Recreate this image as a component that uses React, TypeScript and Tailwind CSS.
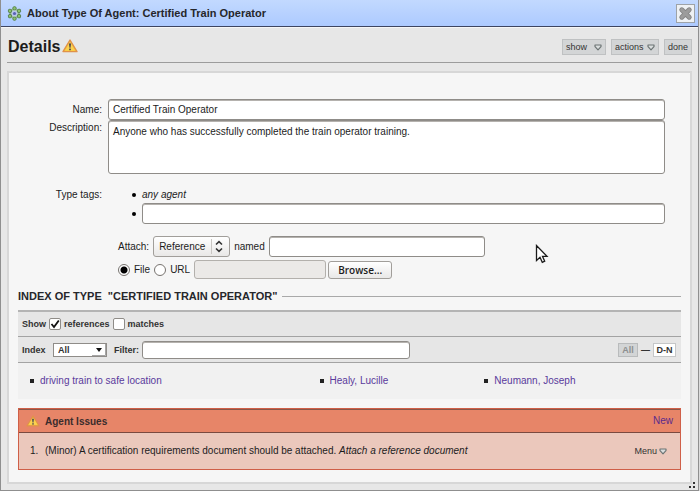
import React from "react";

const field = "rounded-[3px] border border-[#8f8c88] bg-white shadow-[inset_0_1px_0_#b5b2ae]";

function AgentIcon() {
  const dots = [0, 60, 120, 180, 240, 300];
  return (
    <svg width="15" height="15" viewBox="0 0 15 15" aria-hidden="true">
      <circle cx="7.5" cy="7.5" r="4.8" fill="#a9cba6" stroke="#7da07c" strokeWidth="0.8" />
      {dots.map((a) => (
        <g key={a} transform={`rotate(${a} 7.5 7.5)`}>
          <circle cx="7.5" cy="2.3" r="1.7" fill="#8cc46e" stroke="#56804e" strokeWidth="0.9" />
        </g>
      ))}
      <circle cx="7.5" cy="7.5" r="2.9" fill="#b9c6ea" />
      <circle cx="7.5" cy="7.5" r="1.6" fill="#5a62b4" />
    </svg>
  );
}

function Warning({ className }: { className: string }) {
  return (
    <svg className={className} viewBox="0 0 16 14" role="img" aria-label="Warning">
      <path
        d="M8 1.1 L15 12.6 H1 Z"
        fill="#f8c93c"
        stroke="#e0924a"
        strokeWidth="1.4"
        strokeLinejoin="round"
      />
      <path d="M8 3 L12.9 11.5 H3.1 Z" fill="#fbd250" />
      <path d="M7 4.4 H9 L8.5 8.8 H7.5 Z" fill="#3c3c50" />
      <rect x="7.2" y="9.6" width="1.6" height="1.6" fill="#3c3c50" />
    </svg>
  );
}

function Caret() {
  return (
    <svg width="8" height="7" viewBox="0 0 8 7" aria-hidden="true">
      <path
        d="M1 1 H7 V2.6 L4 5.9 L1 2.6 Z"
        fill="#d9dddd"
        stroke="#6d7575"
        strokeWidth="1.2"
        strokeLinejoin="round"
      />
    </svg>
  );
}

function ToolButton({ children, caret }: { children: string; caret?: boolean }) {
  return (
    <button
      type="button"
      className="flex h-4 items-center justify-between border border-[#bfc1c2] bg-[#d3d5d6] px-[3px] text-[9px] leading-3 text-[#333]"
    >
      {children}
      {caret && <Caret />}
    </button>
  );
}

function IndexLink({ children }: { children: string }) {
  return (
    <li className="flex items-center gap-[6px]">
      <span className="size-1 bg-[#222]" />
      <a href="#" className="text-[#5a3a9c]">
        {children}
      </a>
    </li>
  );
}

export default function App() {
  return (
    <div className="bg-[#dcdcdc] pr-px font-['Liberation_Sans',Arial,sans-serif] text-[10px] leading-4 text-[#1c1c1c]">
      <main className="relative border border-t-0 border-[#8f8f8f] bg-[#e7e7e7]">
        <header className="flex h-[27px] items-center justify-between border-b border-[#3e4560] bg-linear-to-b from-[#c2d9ff] to-[#adcaff] pr-[3px] pl-[6px]">
          <div className="flex items-center gap-[5px]">
            <AgentIcon />
            <h1 className="text-[11px] font-bold text-[#26272b]">
              About Type Of Agent: Certified Train Operator
            </h1>
          </div>
          <button
            type="button"
            aria-label="Close"
            className="grid size-[19px] place-items-center border border-[#9ea3a8] bg-[#eef1f4]"
          >
            <svg width="15" height="15" viewBox="0 0 15 15">
              <path
                d="M3.8 3.8 L11.2 11.2 M11.2 3.8 L3.8 11.2"
                stroke="#858585"
                strokeWidth="5"
                strokeLinecap="round"
              />
              <path
                d="M3.8 3.8 L11.2 11.2 M11.2 3.8 L3.8 11.2"
                stroke="#9c9c9c"
                strokeWidth="3.2"
                strokeLinecap="round"
              />
            </svg>
          </button>
        </header>

        <div className="border-t border-[#f6f6f6] px-[6px] pb-[6px]">
          <div className="flex h-[35px] items-center justify-between border-b border-[#9c9c9c] pt-1 pl-px">
            <div className="flex items-center gap-[2px]">
              <h2 className="text-base font-bold">Details</h2>
              <Warning className="mb-[2px] h-[14px] w-4" />
            </div>
            <div className="flex gap-[5px]">
              <div className="grid w-[44px]">
                <ToolButton caret>show</ToolButton>
              </div>
              <div className="grid w-[48px]">
                <ToolButton caret>actions</ToolButton>
              </div>
              <ToolButton>done</ToolButton>
            </div>
          </div>

          <div className="mt-2 border-2 border-[#d7d7d7] bg-[#f6f6f6] pb-3">
            <form className="grid grid-cols-[93px_1fr] gap-x-[6px] pt-[26px] pr-[25px]">
              <label htmlFor="name" className="pt-[3px] text-right">
                Name:
              </label>
              <input
                id="name"
                defaultValue="Certified Train Operator"
                className={`${field} h-[21px] w-full px-1`}
              />
              <label htmlFor="desc" className="text-right">
                Description:
              </label>
              <textarea
                id="desc"
                defaultValue="Anyone who has successfully completed the train operator training."
                className={`${field} h-[54px] w-full resize-none px-1 py-[3px]`}
              />
              <label htmlFor="tag" className="mt-[13px] text-right">
                Type tags:
              </label>
              <ul className="mt-[13px] list-none pl-6">
                <li className="flex items-center gap-[6px]">
                  <span className="size-1 rounded-full bg-black" />
                  <i>any agent</i>
                </li>
                <li className="flex items-center gap-[6px]">
                  <span className="size-1 rounded-full bg-black" />
                  <input
                    id="tag"
                    aria-label="New type tag"
                    className={`${field} h-[21px] flex-1 px-1`}
                  />
                </li>
              </ul>
              <div className="col-start-2 mt-3 flex h-[21px] items-center gap-1 pl-[10px]">
                <label htmlFor="kind">Attach:</label>
                <div className="relative">
                  <select
                    id="kind"
                    className="h-[21px] w-[77px] appearance-none rounded-[3px] border border-[#a19e9a] bg-linear-to-b from-white to-[#e9e8e7] px-[5px]"
                  >
                    <option>Reference</option>
                  </select>
                  <svg
                    className="pointer-events-none absolute top-[3px] right-[3px] h-[15px] w-4"
                    viewBox="0 0 16 15"
                  >
                    <path d="M0.5 0 V15" stroke="#c9c6c3" />
                    <path
                      d="M5 5.5 L8 2.700 L11 5.5 M5 9.5 L8 12.300 L11 9.5"
                      fill="none"
                      stroke="#333"
                      strokeWidth="1.6"
                    />
                  </svg>
                </div>
                <label htmlFor="refname">named</label>
                <input id="refname" className={`${field} h-[21px] w-[216px] px-1`} />
              </div>
              <div className="col-start-2 mt-[3px] flex h-[19px] items-center gap-1 pl-[10px]">
                <input
                  id="file"
                  type="radio"
                  name="src"
                  defaultChecked
                  className="size-3 appearance-none rounded-full border border-[#77736f] bg-white bg-[radial-gradient(circle,#000_3px,transparent_4px)]"
                />
                <label htmlFor="file">File</label>
                <input
                  id="url"
                  type="radio"
                  name="src"
                  className="size-3 appearance-none rounded-full border border-[#77736f] bg-white"
                />
                <label htmlFor="url">URL</label>
                <input
                  aria-label="File path"
                  disabled
                  className="h-[19px] w-[132px] rounded-[3px] border border-[#b3b0ac] bg-[#ebe9e7]"
                />
                <button
                  type="button"
                  className="-ml-[2px] h-[18px] w-16 rounded-[3px] border border-[#a19e9a] bg-linear-to-b from-white to-[#e9e8e7] font-['Open_Sans',sans-serif] text-[10px] leading-3 font-semibold"
                >
                  Browse...
                </button>
              </div>
            </form>

            <section className="mt-[9px] px-[9px]">
              <div className="flex items-center gap-[5px]">
                <h3 className="text-[11px] font-bold text-[#26272b]">
                  INDEX OF TYPE &nbsp;"CERTIFIED TRAIN OPERATOR"
                </h3>
                <hr className="flex-1 border-[#a9a9a9]" />
              </div>
              <div className="mt-[6px] border-t-2 border-[#b4b4b4] bg-[#e6e6e6] text-[9px] font-bold text-[#333]">
                <div className="flex h-[25px] items-center gap-[3px] border-b border-[#a3a3a3] pl-1">
                  <span>Show</span>
                  <div className="relative size-3">
                    <input
                      id="refs"
                      type="checkbox"
                      defaultChecked
                      className="peer block size-3 appearance-none rounded-[2px] border border-[#8f8c88] bg-white"
                    />
                    <svg
                      className="pointer-events-none absolute inset-0 hidden size-3 peer-checked:block"
                      viewBox="0 0 12 12"
                    >
                      <path d="M2.5 6 L5 9 L9.800 2.500" fill="none" stroke="#111" strokeWidth="1.8" />
                    </svg>
                  </div>
                  <label htmlFor="refs">references</label>
                  <input
                    id="matches"
                    type="checkbox"
                    className="size-3 appearance-none rounded-[2px] border border-[#8f8c88] bg-white"
                  />
                  <label htmlFor="matches">matches</label>
                </div>
                <div className="flex h-[26px] items-center border-b border-[#a3a3a3] pr-[5px] pl-1">
                  <label htmlFor="index" className="w-[31px]">
                    Index
                  </label>
                  <div className="relative mr-[7px]">
                    <select
                      id="index"
                      className="block h-[14px] w-[54px] appearance-none border border-[#8f8c88] bg-white px-1 leading-3"
                    >
                      <option>All</option>
                    </select>
                    <svg
                      className="pointer-events-none absolute top-px right-px h-3 w-[14px]"
                      viewBox="0 0 14 12"
                    >
                      <path d="M0 11.5 H13.5 V0" fill="none" stroke="#a5a5a5" />
                      <path d="M4 4 H10 L7 8 Z" fill="#111" />
                    </svg>
                  </div>
                  <label htmlFor="filter" className="w-[28px]">
                    Filter:
                  </label>
                  <input id="filter" className={`${field} h-[18px] w-[268px] px-1`} />
                  <div className="ml-auto flex items-center gap-[3px]">
                    <button
                      type="button"
                      className="h-[14px] w-5 border border-[#b9bbbc] bg-[#d3d5d6] leading-3 text-[#8d8f90]"
                    >
                      All
                    </button>
                    <span>—</span>
                    <button
                      type="button"
                      className="h-[14px] w-[23px] border border-[#c5c7c8] bg-white leading-3"
                    >
                      D-N
                    </button>
                  </div>
                </div>
              </div>
              <ul className="grid h-9 grid-cols-[290fr_165fr_197fr] items-center bg-[#f1f1f1] pl-3">
                <IndexLink>driving train to safe location</IndexLink>
                <IndexLink>Healy, Lucille</IndexLink>
                <IndexLink>Neumann, Joseph</IndexLink>
              </ul>
            </section>

            <section className="mx-[9px] mt-[9px] border border-[#cf5f48] bg-[#ebc8bc]">
              <div className="flex h-6 items-center border-t border-b border-t-[#8a5648] border-b-[#7a4a40] bg-[#e78568] pr-[7px] pl-[7px]">
                <Warning className="h-3 w-[14px]" />
                <h3 className="ml-[5px] pt-[2px] font-bold text-[#3a2c2c]">Agent Issues</h3>
                <a href="#" className="ml-auto text-[#5a2a8c]">
                  New
                </a>
              </div>
              <ol className="pt-[10px] pb-[10px]">
                <li className="flex items-center pr-[13px] pl-[11px]">
                  <span className="w-[15px]">1.</span>
                  <span>
                    (Minor) A certification requirements document should be attached.{" "}
                    <a href="#" className="italic">
                      Attach a reference document
                    </a>
                  </span>
                  <button
                    type="button"
                    className="ml-auto flex items-center gap-[2px] text-[9px] text-[#333]"
                  >
                    Menu
                    <Caret />
                  </button>
                </li>
              </ol>
            </section>
          </div>
        </div>

        <svg className="absolute right-[3px] bottom-[2px] size-[6px]" viewBox="0 0 6 6">
          <path d="M0 4h2v2H0z M4 4h2v2H4z M4 0h2v2H4z" fill="#333" />
        </svg>
        <svg
          className="pointer-events-none absolute top-[244px] left-[534px] h-5 w-[14px]"
          viewBox="0 0 14 20"
        >
          <path
            d="M1.5 1.5 V16.5 L5 13.3 L7.3 18.3 L9.7 17.2 L7.5 12.3 H12 Z"
            fill="#fff"
            stroke="#1c1c1c"
            strokeWidth="1.3"
          />
        </svg>
      </main>
    </div>
  );
}
